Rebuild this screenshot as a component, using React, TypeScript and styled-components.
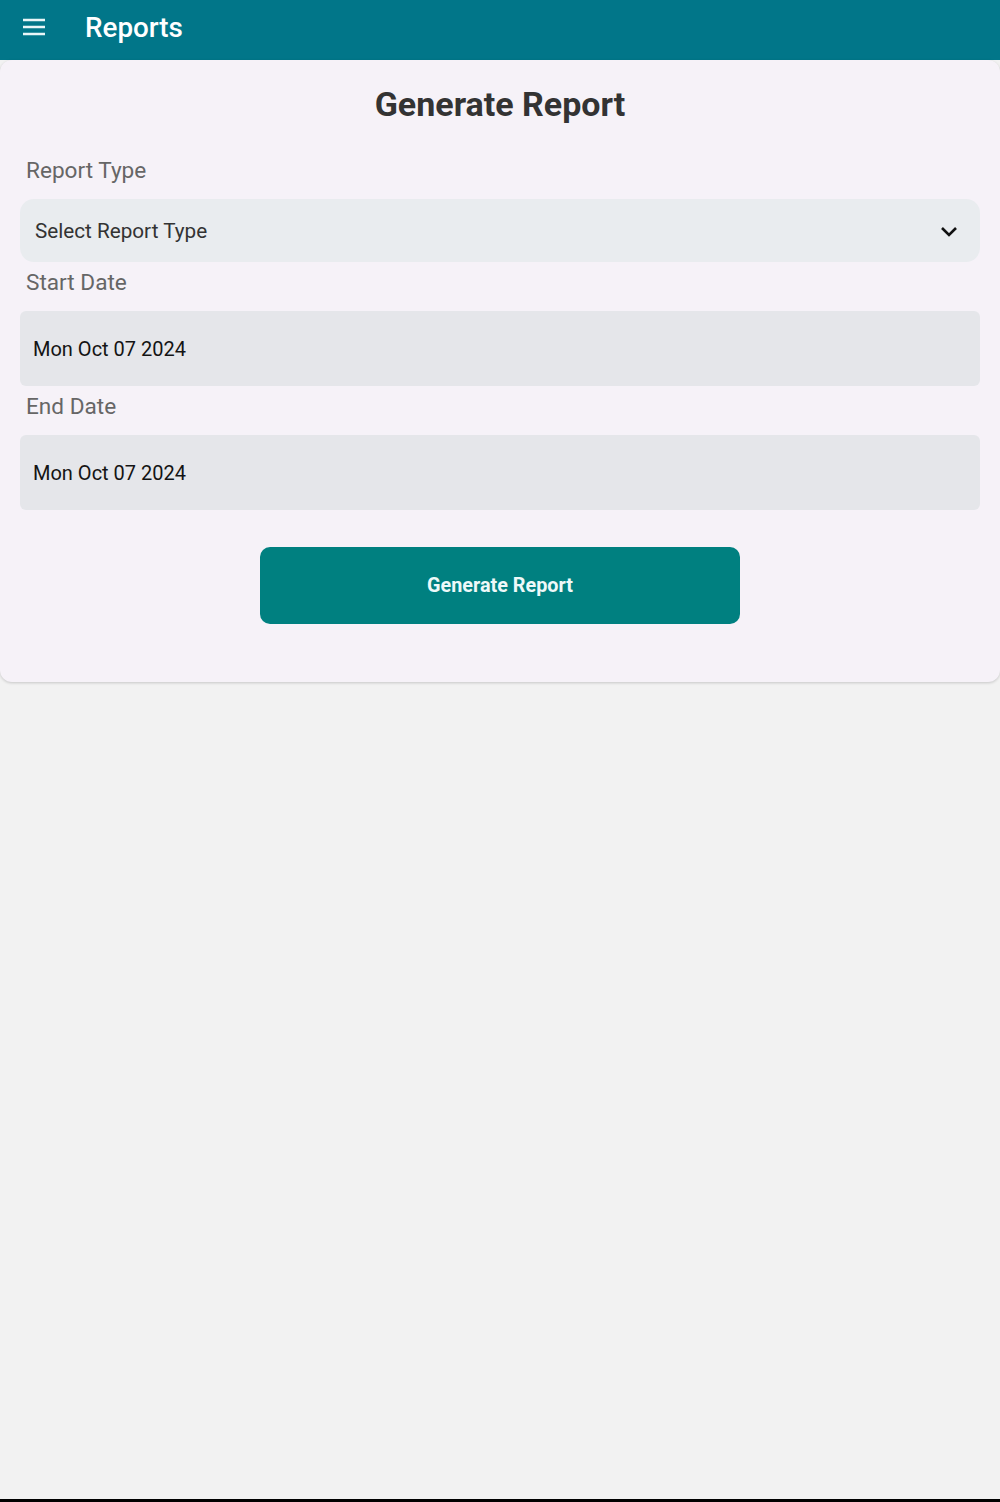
import styled, { createGlobalStyle } from "styled-components";

const GlobalStyle = createGlobalStyle`
    html, body {
        margin: 0;
        padding: 0;
        background: #f2f2f2;
        font-family: Roboto, "Noto Sans", sans-serif;
    }
`;

const Screen = styled.div`
    height: 1502px;
    display: flex;
    flex-direction: column;
    background: #f2f2f2;
    border-bottom: 3px solid #000;
    box-sizing: border-box;
`;

const AppBar = styled.header`
    height: 60px;
    background-color: #017689;
    display: flex;
    align-items: center;
    padding-left: 21px;
    gap: 38px;
    flex-shrink: 0;
`;

const MenuButton = styled.div`
    width: 26px;
    height: 26px;
    display: flex;
    align-items: center;
    justify-content: center;
    margin-top: -7px;
`;

const BarTitle = styled.h1`
    margin: 0 0 6px;
    color: #ffffff;
    font-size: 27.8px;
    font-weight: 500;
`;

const Card = styled.main`
    background: #f6f2f8;
    border-radius: 12px;
    box-shadow: 0 1px 3px rgba(0, 0, 0, 0.18);
    padding: 26px 20px 58px;
    display: flex;
    flex-direction: column;
`;

const Heading = styled.h2`
    margin: 0;
    text-align: center;
    font-size: 34px;
    line-height: 36px;
    font-weight: 700;
    color: #333333;
`;

const Label = styled.label<{ $first?: boolean }>`
    display: block;
    margin: ${(p) => (p.$first ? "36px" : "8px")} 0 15px 6px;
    font-size: 22.6px;
    line-height: 26px;
    color: #666666;
`;

const SelectBox = styled.div`
    height: 63px;
    border-radius: 14px;
    background: #e9ecef;
    display: flex;
    align-items: center;
    justify-content: space-between;
    padding: 0 22px 0 15px;
    font-size: 20.7px;
    color: #333333;
`;

const DateField = styled.div`
    height: 75px;
    border-radius: 6px;
    background: #e5e6ea;
    display: flex;
    align-items: center;
    padding: 0 13px;
    font-size: 20px;
    color: #141414;
`;

const ButtonRow = styled.div`
    display: flex;
    justify-content: center;
    margin-top: 37px;
`;

const PrimaryButton = styled.button`
    width: 480px;
    height: 77px;
    border: none;
    border-radius: 10px;
    background: #008080;
    color: #eef9f9;
    font-family: inherit;
    font-size: 19.8px;
    font-weight: 700;
    cursor: pointer;
`;

export default function App() {
    return (
        <>
            <GlobalStyle />
            <Screen>
                <AppBar>
                    <MenuButton>
                        <svg width="24" height="18" viewBox="0 0 24 18">
                            <path d="M1 2h22M1 9h22M1 16h22" stroke="#e9f6f8" strokeWidth="2.4" />
                        </svg>
                    </MenuButton>
                    <BarTitle>Reports</BarTitle>
                </AppBar>
                <Card>
                    <Heading>Generate Report</Heading>
                    <Label $first>Report Type</Label>
                    <SelectBox>
                        <span>Select Report Type</span>
                        <svg width="18" height="12" viewBox="0 0 18 12">
                            <path d="M2 3l7 7 7-7" fill="none" stroke="#111" strokeWidth="2.6" />
                        </svg>
                    </SelectBox>
                    <Label>Start Date</Label>
                    <DateField>Mon Oct 07 2024</DateField>
                    <Label>End Date</Label>
                    <DateField>Mon Oct 07 2024</DateField>
                    <ButtonRow>
                        <PrimaryButton>Generate Report</PrimaryButton>
                    </ButtonRow>
                </Card>
            </Screen>
        </>
    );
}
